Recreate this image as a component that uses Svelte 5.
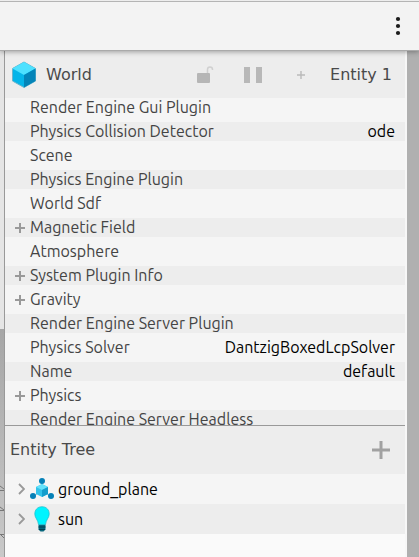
<script>
  const rows = [
    { name: 'Render Engine Gui Plugin' },
    { name: 'Physics Collision Detector', value: 'ode' },
    { name: 'Scene' },
    { name: 'Physics Engine Plugin' },
    { name: 'World Sdf' },
    { name: 'Magnetic Field', group: true },
    { name: 'Atmosphere' },
    { name: 'System Plugin Info', group: true },
    { name: 'Gravity', group: true },
    { name: 'Render Engine Server Plugin' },
    { name: 'Physics Solver', value: 'DantzigBoxedLcpSolver' },
    { name: 'Name', value: 'default' },
    { name: 'Physics', group: true },
    { name: 'Render Engine Server Headless' }
  ];
  const entities = [
    { name: 'ground_plane', kind: 'model' },
    { name: 'sun', kind: 'light' }
  ];
</script>

<div class="app">
  <header class="toolbar">
    <button class="more" aria-label="More options">
      <svg width="6" height="20" viewBox="0 0 6 20" fill="#1b1b1b"><circle cx="3" cy="3" r="2.1" /><circle cx="3" cy="10" r="2.1" /><circle cx="3" cy="17" r="2.1" /></svg>
    </button>
  </header>

  <div class="body">
    <div class="scene">
      <svg width="4" height="72" viewBox="0 0 4 72" fill="none" stroke="#777"><path d="M0 1l4 3M0 5.500h4M0 22l4 3M0 25.500h4M0 49l4 4M0 49.500h4" /></svg>
    </div>
    <main class="panels">
      <section class="inspector">
        <div class="head">
          <svg class="cube" width="24" height="28" viewBox="0 0 24 28">
            <path d="M12 1L23.5 7.5V20L12 26.5L.5 20V7.5z" fill="#05b5e9" stroke="#6bb5cc" />
            <path d="M12 1L23.5 7.5L12 14L.5 7.5z" fill="#4de1ff" />
            <path d="M12 14L23.5 7.5V20L12 26.5z" fill="#0484b8" />
          </svg>
          <h2 class="title">World</h2>
          <button class="tool" aria-label="Lock">
            <svg width="18" height="20" viewBox="0 0 18 20"><rect x="1" y="8" width="13" height="10" rx="1" fill="#b6b6b6" /><path d="M11.500 8V4.500a2.500 2.500 0 0 1 5 0V5" fill="none" stroke="#d0d0d0" stroke-width="1.500" /></svg>
          </button>
          <button class="tool" aria-label="Pause updates">
            <svg width="20" height="16" viewBox="0 0 20 16" fill="#b8b8b8"><path d="M1 0h6v16H1zM13 0h6v16h-6z" /></svg>
          </button>
          <button class="tool" aria-label="Add component">
            <svg width="8" height="8" viewBox="0 0 8 8" stroke="#bababa" stroke-width="1.400"><path d="M4 0v8M0 4h8" /></svg>
          </button>
          <span class="entity">Entity 1</span>
        </div>
        <ul class="props">
          {#each rows as row}
            <li>
              {#if row.group}
                <button class="expand" aria-label="Expand {row.name}">
                  <svg width="10" height="10" viewBox="0 0 10 10" stroke="#999" stroke-width="2"><path d="M5 0v10M0 5h10" /></svg>
                </button>
              {:else}
                <span class="expand"></span>
              {/if}
              <span class="name">{row.name}</span>
              {#if row.value}<span class="value">{row.value}</span>{/if}
            </li>
          {/each}
        </ul>
      </section>

      <section class="tree">
        <div class="treehead">
          <h2 class="title">Entity Tree</h2>
          <button class="tool" aria-label="Add entity">
            <svg width="18" height="18" viewBox="0 0 18 18" stroke="#a1a1a1" stroke-width="3"><path d="M9 0v18M0 9h18" /></svg>
          </button>
        </div>
        <ul class="entities">
          {#each entities as item}
            <li>
              <button class="chevron" aria-label="Expand {item.name}">
                <svg width="7" height="12" viewBox="0 0 7 12" fill="none" stroke="#999" stroke-width="1.800"><path d="M1 1l5 5l-5 5" /></svg>
              </button>
              {#if item.kind === 'model'}
                <svg width="24" height="26" viewBox="0 0 24 26">
                  <path d="M12 4v8M4 20l8-6l8 6" stroke="#75b5cf" fill="none" />
                  <path d="M12 8l6 3v7l-6 3l-6-3v-7z" fill="#32c3ea" />
                  <path d="M12 8l6 3l-6 3l-6-3z" fill="#63e2fb" />
                  <path d="M12 14l6-3v7l-6 3z" fill="#139dcc" />
                  <g fill="#0581b8"><circle cx="12" cy="5" r="3" /><circle cx="3" cy="20" r="3" /><circle cx="21" cy="20" r="3" /></g>
                </svg>
              {:else}
                <svg width="24" height="26" viewBox="0 0 24 26">
                  <path d="M8.500 18.500h7v5l-2 2h-3l-2-2z" fill="#08677d" />
                  <path d="M8.500 21h7M9 23.500h6" stroke="#023f50" />
                  <path d="M12 .700c-4.600 0-7.200 3.200-7.200 7.300c0 4 3.200 5.500 3.700 10.500h7c.5-5 3.700-6.500 3.700-10.500c0-4.100-2.600-7.300-7.200-7.300z" fill="#00f4ff" stroke="#17bccb" stroke-width=".700" />
                </svg>
              {/if}
              <span>{item.name}</span>
            </li>
          {/each}
        </ul>
      </section>
    </main>
    <div class="gutter"></div>
  </div>
</div>

<style>
  :global(body) { margin: 0; }
  .app {
    display: flex;
    flex-direction: column;
    height: 100vh;
    overflow: hidden;
    font: 16px/20px "DejaVu Sans", sans-serif;
    color: #4a4a4a;
    background: #b0b0b0;
  }
  button {
    display: flex;
    align-items: center;
    justify-content: center;
    padding: 0;
    border: 0;
    background: none;
  }
  ul { margin: 0; padding: 0; list-style: none; }
  svg { display: block; flex: none; }
  .toolbar {
    display: flex;
    align-items: center;
    justify-content: flex-end;
    box-sizing: border-box;
    height: 51px;
    padding: 2px 12px 0;
    background: linear-gradient(#ededed 1px, #b4b4b4 1px, #b4b4b4 2px, #f3f3f3 2px);
    border-bottom: 1px solid #aaa;
    box-shadow: 0 1px 5px #0005;
    z-index: 1;
  }
  .more { width: 18px; height: 32px; }
  .body { display: flex; flex: 1; min-height: 0; }
  .scene {
    display: flex;
    flex-direction: column;
    justify-content: flex-end;
    width: 4px;
    background: linear-gradient(#e5e5e5 55%, #a6a6a6 55%, #c9c9c9);
  }
  .panels {
    display: flex;
    flex: 1;
    flex-direction: column;
    min-width: 0;
    border-left: 1px solid #999;
    border-right: 2px solid #f7f7f7;
    background: #fafafa;
  }
  .gutter { width: 12px; background: #b0b0b0; }
  .inspector { flex: 1; min-height: 0; overflow: hidden; background: #f5f5f5; }
  .head {
    display: flex;
    align-items: center;
    height: 47px;
    padding: 0 13px 0 7px;
    background: #ededed;
  }
  .title { flex: 1; margin: 0; font-size: 16px; font-weight: 400; }
  .head .title { padding-left: 10px; }
  .tool { width: 48px; height: 40px; }
  .entity { padding-left: 5px; }
  .props {
    display: flex;
    flex-direction: column;
    gap: 5px;
    font: 16px/19px Ubuntu, "Noto Sans", sans-serif;
    color: #444;
  }
  .props li { display: flex; height: 19px; padding-right: 10px; white-space: nowrap; }
  .props li:nth-child(even) { background: #ededed; }
  .expand { box-sizing: border-box; width: 25px; height: 19px; padding-left: 5px; }
  .name { flex: 1; }
  .value { color: #000; }
  .tree { padding-bottom: 23px; border-top: 1px solid #999; }
  .treehead {
    display: flex;
    align-items: center;
    height: 48px;
    padding-left: 5px;
    background: #ededed;
  }
  .entities { font: 16px/20px Ubuntu, "Noto Sans", sans-serif; color: #000; }
  .entities li { display: flex; align-items: center; height: 30px; padding-left: 8px; background: #f5f5f5; }
  .entities li:nth-child(even) { background: #ededed; }
  .chevron { width: 17px; height: 24px; }
  .entities span { padding-left: 4px; }
</style>
